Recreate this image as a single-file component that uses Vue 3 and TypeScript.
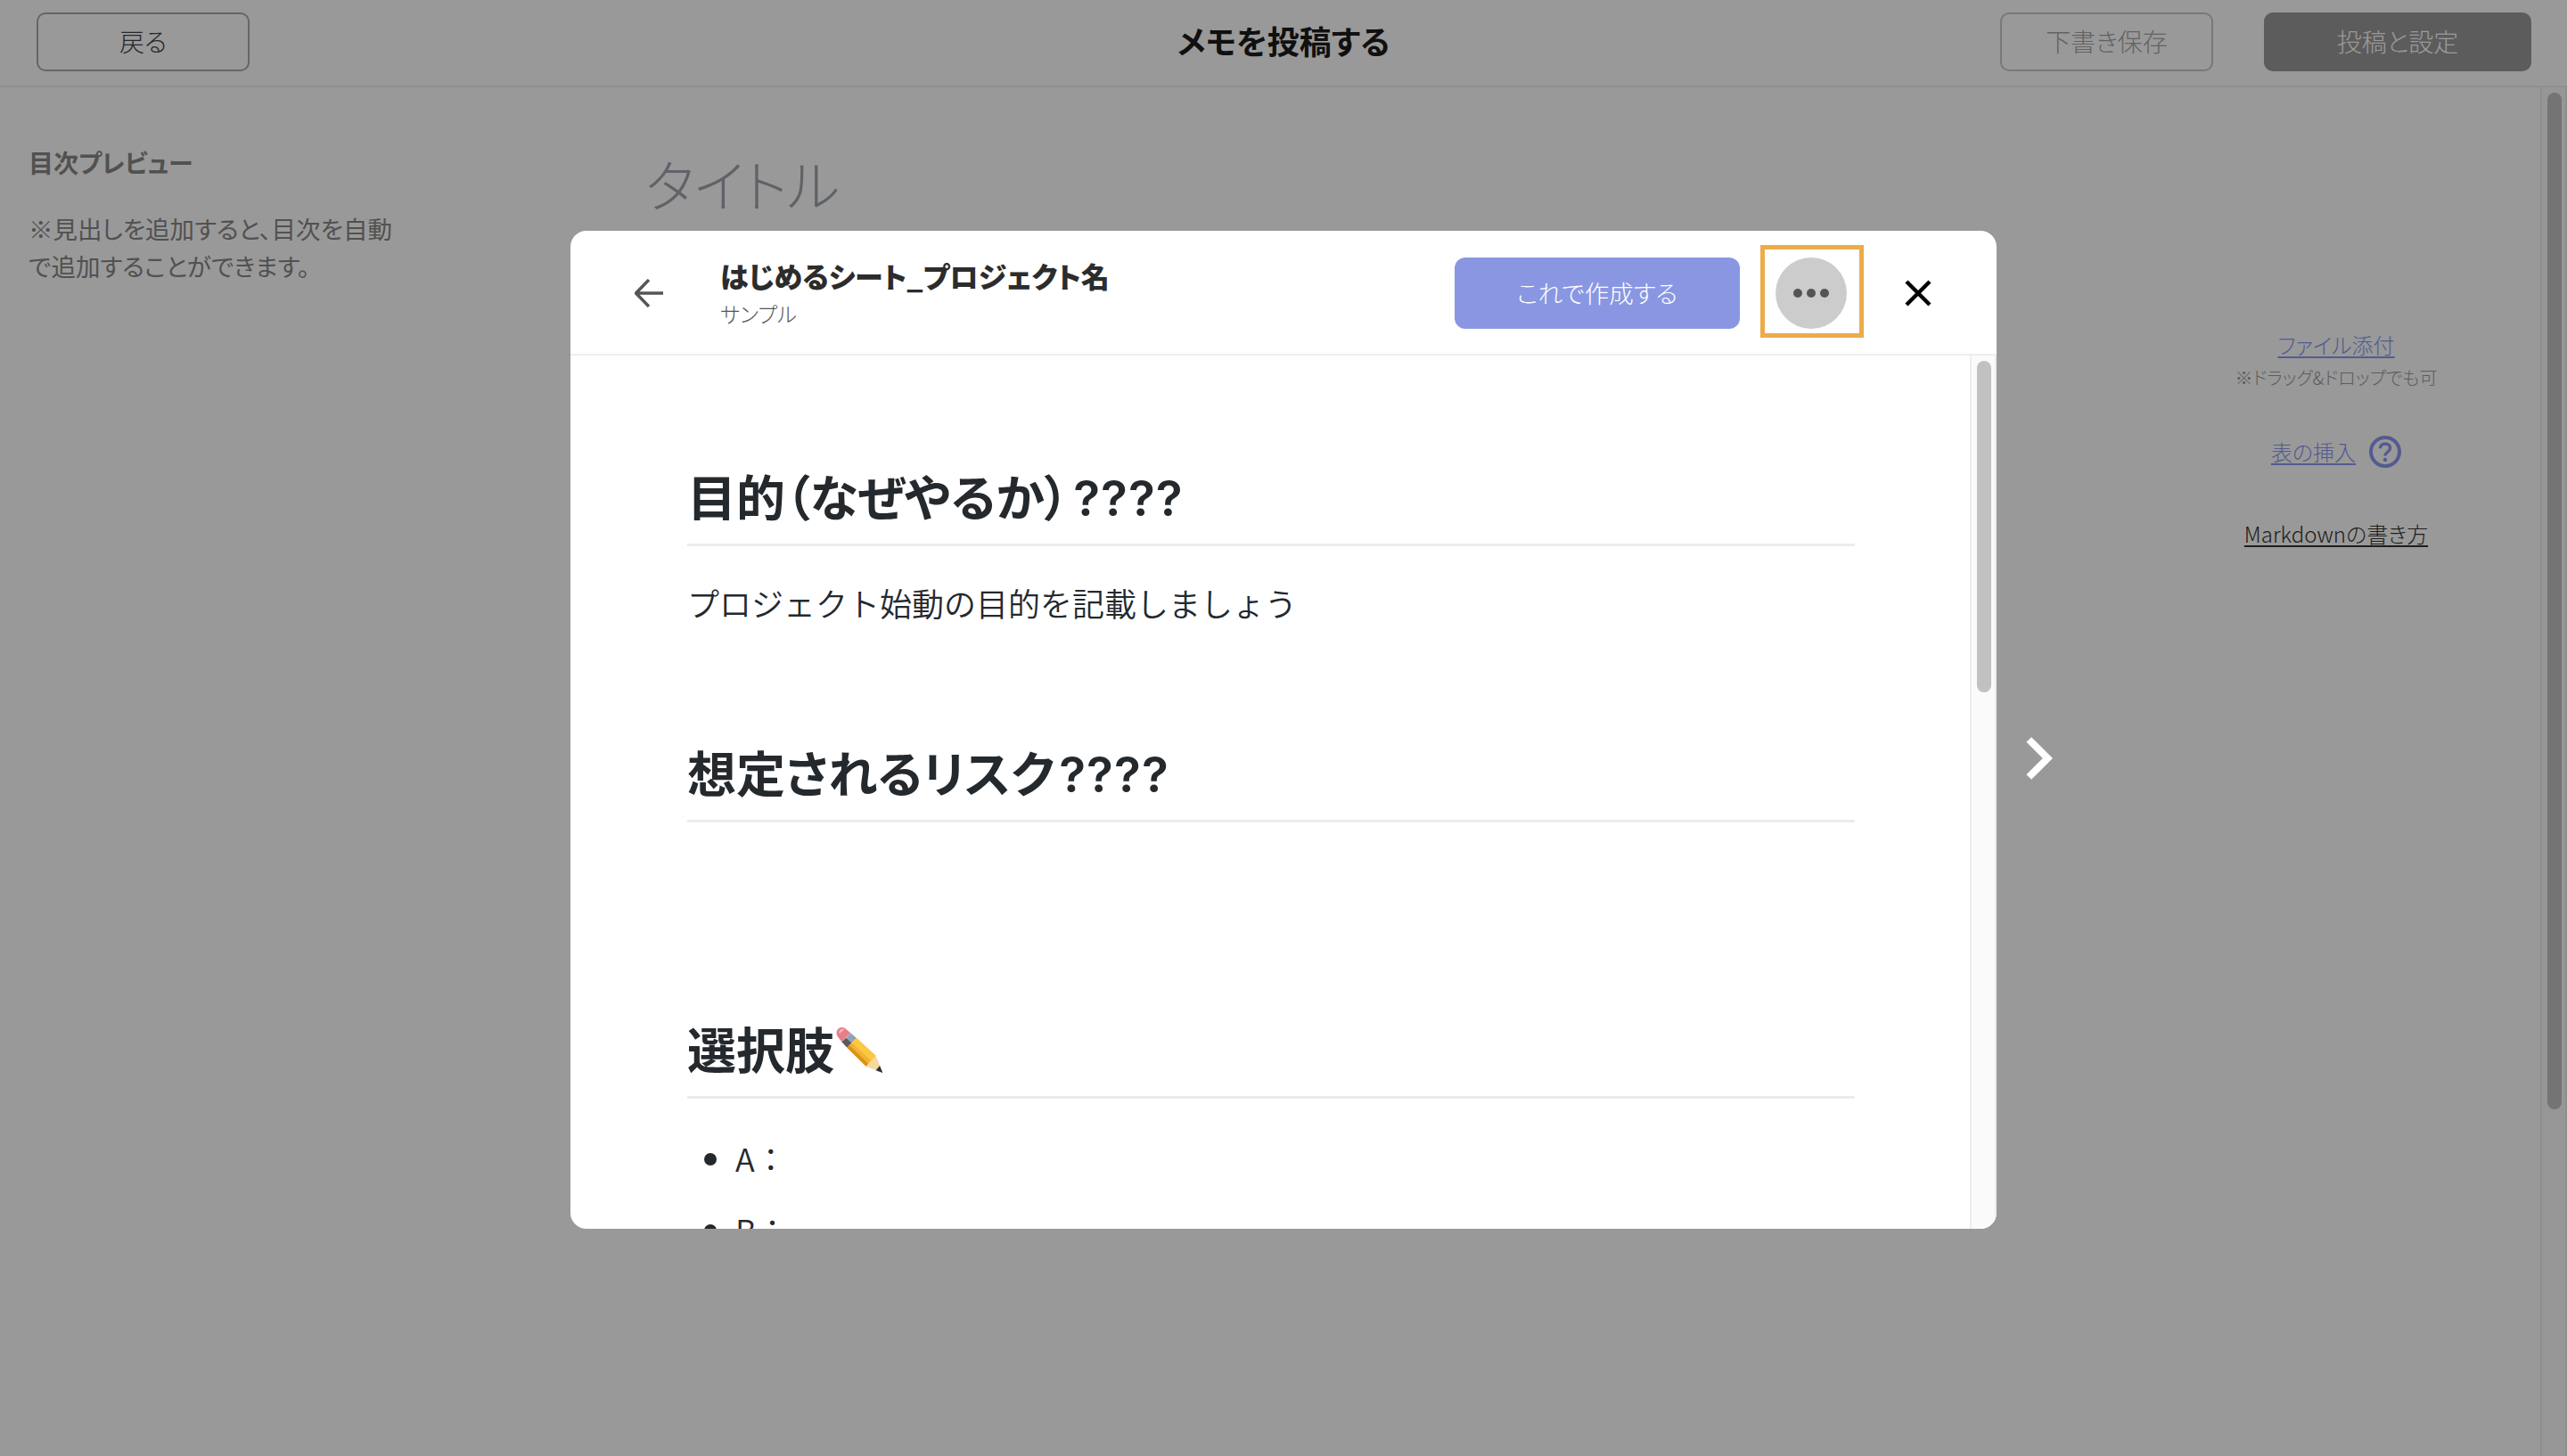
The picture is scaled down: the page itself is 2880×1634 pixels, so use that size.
<script setup lang="ts">
const sections = [
  { title: '目的（なぜやるか）', suffix: '????', body: 'プロジェクト始動の目的を記載しましょう' },
  { title: '想定されるリスク', suffix: '????', body: '' },
]
const options = ['A：', 'B：', 'C：']
</script>

<template>
  <div class="page">
    <header class="topbar">
      <button class="btn back">戻る</button>
      <h1 class="page-title">メモを投稿する</h1>
      <div class="top-actions">
        <button class="btn draft">下書き保存</button>
        <button class="btn post">投稿と設定</button>
      </div>
    </header>

    <div class="editor">
      <aside class="toc">
        <h3>目次プレビュー</h3>
        <p>※見出しを追加すると、目次を自動<br />で追加することができます。</p>
      </aside>
      <main class="draft-area">
        <div class="title-input">タイトル</div>
      </main>
      <aside class="tools">
        <a class="link">ファイル添付</a>
        <small>※ドラッグ&amp;ドロップでも可</small>
        <div class="table-row">
          <a class="link">表の挿入</a>
          <svg class="help" viewBox="0 0 36 36" fill="none">
            <circle cx="18" cy="18" r="16" stroke="currentColor" stroke-width="4" />
            <path d="M12.400 14.200c0-3.200 2.500-5.200 5.700-5.200 3.100 0 5.500 1.900 5.500 4.800 0 4.300-5.600 4.500-5.600 8.600" stroke="currentColor" stroke-width="3.400" />
            <circle cx="18" cy="27" r="2.200" fill="currentColor" />
          </svg>
        </div>
        <a class="link dark">Markdownの書き方</a>
      </aside>
      <div class="scrollbar page-scroll"><span></span></div>
    </div>

    <div class="overlay">
      <section class="modal">
        <header class="modal-head">
          <svg class="back-arrow" viewBox="0 0 32 32" fill="none">
            <path d="M32 16H2M16 1 1.500 16 16 31" stroke="currentColor" stroke-width="3.4" />
          </svg>
          <div class="modal-title">
            <strong>はじめるシート_プロジェクト名</strong>
            <span>サンプル</span>
          </div>
          <button class="create">これで作成する</button>
          <div class="highlight">
            <button class="more"><i></i><i></i><i></i></button>
          </div>
          <svg class="close" viewBox="0 0 30 30" fill="none">
            <path d="M2 2 28 28M28 2 2 28" stroke="currentColor" stroke-width="4.4" />
          </svg>
        </header>
        <div class="modal-body">
          <article class="doc">
            <template v-for="s in sections" :key="s.title">
              <h2>{{ s.title }}<em>{{ s.suffix }}</em></h2>
              <p class="para">{{ s.body }}</p>
            </template>
            <h2 class="last">選択肢<svg class="pencil" viewBox="25 20 170 170">
                <path d="M38 62C22 40 45 18 65 35L80 48 50 78Z" fill="#e87f88" />
                <path d="M42 50C38 38 50 30 60 36L52 42Z" fill="#f6b9bd" />
                <path d="M65 64 80 48 100 65 84 81Z" fill="#8ea4bc" />
                <path d="M50 78 65 64 84 81 68 97Z" fill="#5a5a5c" />
                <path d="M68 97 100 65 165 125 132 160Z" fill="#f2b32e" />
                <path d="M84 81 100 65 165 125 150 142Z" fill="#fbc844" />
                <path d="M68 97 76 89 140 152 132 160Z" fill="#d8921e" />
                <path d="M132 160 165 125 188 182Z" fill="#f5d9a0" />
                <path d="M178 158 188 182 165 174Z" fill="#29323a" />
              </svg></h2>
            <ul>
              <li v-for="o in options" :key="o">{{ o }}</li>
            </ul>
          </article>
          <div class="scrollbar modal-scroll"><span></span></div>
        </div>
      </section>
      <svg class="next" viewBox="0 0 30 48" fill="none">
        <path d="M3.300 3 24.300 24 3.300 45" stroke="currentColor" stroke-width="8" />
      </svg>
    </div>
  </div>
</template>

<style>
html,
body {
  margin: 0;
  overflow: hidden;
}
</style>

<style scoped>
* {
  box-sizing: border-box;
}

.page {
  position: relative;
  width: 2880px;
  height: 1634px;
  overflow: hidden;
  display: flex;
  flex-direction: column;
  background: #fff;
  color: #333;
  font-family: "Noto Sans CJK JP", Inter, sans-serif;
  font-feature-settings: "palt";
}

.btn {
  height: 66px;
  padding: 0 0 2px;
  border-radius: 10px;
  font: inherit;
  font-size: 28px;
  font-weight: 300;
  cursor: pointer;
}

/* ヘッダー */
.topbar {
  flex: none;
  height: 98px;
  display: flex;
  align-items: flex-start;
  justify-content: space-between;
  padding: 14px 40px 0 41px;
  border-bottom: 2px solid #eee;
  position: relative;
}

.back {
  width: 239px;
  background: #fff;
  border: 2px solid #a8a8a8;
  color: #444;
}

.page-title {
  position: absolute;
  left: 0;
  right: 0;
  top: 21px;
  margin: 0;
  text-align: center;
  font-size: 36px;
  line-height: 48px;
  font-weight: 700;
  color: #1c1c1c;
  pointer-events: none;
}

.top-actions {
  display: flex;
  gap: 57px;
}

.draft {
  width: 239px;
  background: #fff;
  border: 2px solid #c8c8c8;
  color: #a6a6a6;
}

.post {
  width: 300px;
  background: #9a9a9a;
  border: none;
  color: #fff;
}

/* エディタ */
.editor {
  flex: 1;
  display: flex;
  min-height: 0;
}

.toc {
  width: 724px;
  flex: none;
  padding: 64px 0 0 32px;
  font-size: 27.500px;
}

.toc h3 {
  margin: 0;
  font-size: 28px;
  line-height: 40px;
  font-weight: 700;
  color: #888;
}

.toc p {
  margin: 33px 0 0;
  line-height: 42px;
  color: #888;
}

.draft-area {
  flex: 1;
}

.title-input {
  margin-top: 62px;
  font-size: 63px;
  line-height: 90px;
  font-weight: 300;
  color: #9ea5ad;
}

.tools {
  width: 330px;
  flex: none;
  padding-top: 271px;
  display: flex;
  flex-direction: column;
  align-items: center;
  margin-right: 64px;
}

.link {
  font-size: 24px;
  line-height: 36px;
  font-weight: 300;
  color: #8a98f0;
  text-decoration: underline;
  text-underline-offset: 3px;
}

.tools small {
  margin-top: 4px;
  font-size: 20px;
  line-height: 30px;
  font-weight: 300;
  color: #999;
}

.table-row {
  margin-top: 50px;
  display: flex;
  align-items: center;
  gap: 15px;
  color: #8a98f0;
}

.help {
  width: 36px;
  height: 36px;
}

.link.dark {
  margin-top: 56px;
  color: #333;
}

.scrollbar {
  flex: none;
  width: 30px;
  padding: 6px 4px 0 6px;
  background: #fafafa;
  border-left: 2px solid #ececec;
  border-right: 2px solid #ececec;
}

.scrollbar span {
  display: block;
  width: 16px;
  background: #c1c1c1;
  border-radius: 8px;
}

.page-scroll span {
  height: 1141px;
}

/* モーダル */
.overlay {
  position: absolute;
  inset: 0;
  background: rgba(0, 0, 0, 0.4);
}

.modal {
  position: absolute;
  left: 640px;
  top: 259px;
  width: 1600px;
  height: 1120px;
  border-radius: 18px;
  background: #fff;
  overflow: hidden;
  display: flex;
  flex-direction: column;
}

.modal-head {
  flex: none;
  height: 140px;
  display: flex;
  align-items: center;
  padding: 2px 73px 0 72px;
  border-bottom: 2px solid #eee;
  color: #111;
}

.back-arrow {
  flex: none;
  width: 32px;
  height: 32px;
  color: #555;
}

.modal-title {
  margin-left: 64px;
  padding-bottom: 3px;
  flex: 1;
  display: flex;
  flex-direction: column;
}

.modal-title strong {
  font-size: 32px;
  line-height: 44px;
  font-weight: 900;
  color: #2c2c2c;
}

.modal-title span {
  margin-top: 4px;
  font-size: 23.500px;
  line-height: 34px;
  font-weight: 300;
  color: #555;
}

.create {
  flex: none;
  width: 320px;
  height: 80px;
  padding: 0 0 2px;
  border: none;
  border-radius: 12px;
  background: #8997e3;
  color: #fff;
  font: inherit;
  font-size: 27.500px;
  font-weight: 300;
}

.highlight {
  flex: none;
  width: 116px;
  height: 104px;
  margin: 0 0 5px 23px;
  padding: 5px 2px 0 0;
  border: 5px solid #edab4a;
  display: flex;
  align-items: center;
  justify-content: center;
}

.more {
  width: 80px;
  height: 80px;
  padding: 0;
  border: none;
  border-radius: 50%;
  background: #ccc;
  display: flex;
  align-items: center;
  justify-content: center;
  gap: 5px;
}

.more i {
  width: 10px;
  height: 10px;
  border-radius: 50%;
  background: #555;
}

.close {
  flex: none;
  width: 30px;
  height: 30px;
  margin-left: 46px;
  color: #000;
}

.modal-body {
  flex: 1;
  min-height: 0;
  display: flex;
}

.doc {
  flex: 1;
  min-width: 0;
  overflow: hidden;
  padding: 119px 129px 0 131px;
  color: #24292e;
}

.doc h2 {
  margin: 0;
  height: 95px;
  padding-top: 4px;
  font-size: 55px;
  line-height: 66px;
  font-weight: 700;
  border-bottom: 3px solid #eaecef;
  white-space: nowrap;
}

.doc h2 em {
  font-style: normal;
  font-family: Inter, sans-serif;
  font-weight: 600;
  letter-spacing: 1px;
  margin-left: 5px;
}

.para {
  margin: 0;
  height: 215px;
  padding-top: 33px;
  font-size: 36px;
  line-height: 60px;
  font-weight: 350;
  font-feature-settings: normal;
}

.pencil {
  width: 56.700px;
  height: 56.700px;
  vertical-align: -8px;
}

.doc ul {
  margin: 36px 0 0;
  padding: 0 0 0 54px;
  font-size: 36px;
  line-height: 60px;
  font-weight: 350;
  font-feature-settings: normal;
}

.doc li {
  margin-bottom: 20px;
}

.modal-scroll {
  padding-top: 6px;
}

.modal-scroll span {
  height: 372px;
}

.next {
  position: absolute;
  left: 2273px;
  top: 827px;
  width: 30px;
  height: 48px;
  color: #fff;
}
</style>
